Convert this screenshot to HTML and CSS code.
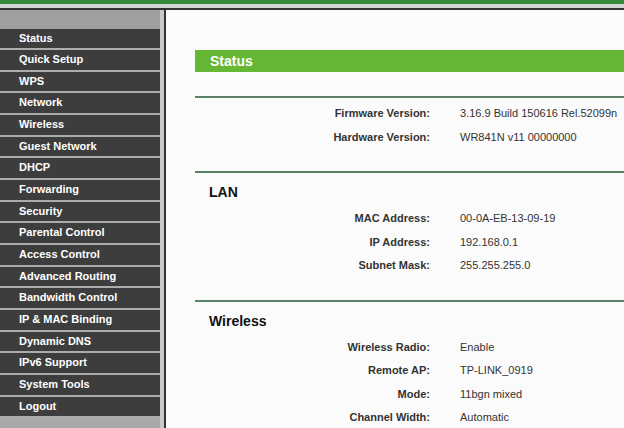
FILE: index.html
```html
<!DOCTYPE html>
<html>
<head>
<meta charset="utf-8">
<link rel="stylesheet" href="styles.css">
</head>
<body>
<div class="top-green"></div>
<div class="top-strip"></div>
<div class="layout">
  <nav class="sidebar">
    <div class="side-head"></div>
    <ul class="menu">
      <li>Status</li>
      <li>Quick Setup</li>
      <li>WPS</li>
      <li>Network</li>
      <li>Wireless</li>
      <li>Guest Network</li>
      <li>DHCP</li>
      <li>Forwarding</li>
      <li>Security</li>
      <li>Parental Control</li>
      <li>Access Control</li>
      <li>Advanced Routing</li>
      <li>Bandwidth Control</li>
      <li>IP &amp; MAC Binding</li>
      <li>Dynamic DNS</li>
      <li>IPv6 Support</li>
      <li>System Tools</li>
      <li>Logout</li>
    </ul>
  </nav>
  <main class="main">
    <div class="title-bar">Status</div>
    <section class="section first">
      <div class="rows">
        <div class="label">Firmware Version:</div><div class="value">3.16.9 Build 150616 Rel.52099n</div>
        <div class="label">Hardware Version:</div><div class="value">WR841N v11 00000000</div>
      </div>
    </section>
    <section class="section">
      <h2 class="heading">LAN</h2>
      <div class="rows">
        <div class="label">MAC Address:</div><div class="value">00-0A-EB-13-09-19</div>
        <div class="label">IP Address:</div><div class="value">192.168.0.1</div>
        <div class="label">Subnet Mask:</div><div class="value">255.255.255.0</div>
      </div>
    </section>
    <section class="section">
      <h2 class="heading">Wireless</h2>
      <div class="rows">
        <div class="label">Wireless Radio:</div><div class="value">Enable</div>
        <div class="label">Remote AP:</div><div class="value">TP-LINK_0919</div>
        <div class="label">Mode:</div><div class="value">11bgn mixed</div>
        <div class="label">Channel Width:</div><div class="value">Automatic</div>
      </div>
    </section>
  </main>
</div>
</body>
</html>
```
FILE: styles.css
```css
html, body {
  margin: 0;
  padding: 0;
  height: 100%;
  overflow: hidden;
}
body {
  font-family: "Liberation Sans", Arial, sans-serif;
  background: #fbfbfb;
}
.top-green {
  height: 4px;
  background: #358a3c;
}
.top-strip {
  height: 4px;
  background: #d3d6d3;
  border-bottom: 2px solid #333;
}
.layout {
  display: flex;
  height: 418px;
}
.sidebar {
  width: 160px;
  flex: none;
  background: #a9a9a9;
  border-right: 4px solid #c9c9c9;
}
.side-head {
  height: 18.5px;
  background: #a0a0a0;
}
.menu {
  list-style: none;
  margin: 0;
  padding: 0;
}
.menu li {
  height: 19.67px;
  line-height: 19.67px;
  background: #3d3d3d;
  border-bottom: 2px solid #acacac;
  color: #fff;
  font-weight: bold;
  font-size: 11px;
  padding-left: 19px;
  white-space: nowrap;
}
.main {
  flex: 1;
  border-left: 2px solid #333;
  background: #fbfbfb;
  padding: 40px 0 0 29px;
  overflow: hidden;
}
.title-bar {
  height: 22px;
  line-height: 22px;
  background: #66b733;
  color: #fff;
  font-weight: bold;
  font-size: 14px;
  padding-left: 15px;
  margin-bottom: 23.5px;
}
.section {
  border-top: 2px solid #5b8068;
  padding: 4px 0 22.5px;
}
.heading {
  margin: 5px 0 4.5px 14px;
  font-size: 14px;
  line-height: 20px;
  font-weight: bold;
  color: #111;
}
.rows {
  display: grid;
  grid-template-columns: 235px 1fr;
  column-gap: 30px;
  grid-auto-rows: 23.5px;
  align-items: center;
  font-size: 11px;
  color: #333;
}
.label {
  text-align: right;
  font-weight: bold;
}
.value {
  white-space: nowrap;
}
```
